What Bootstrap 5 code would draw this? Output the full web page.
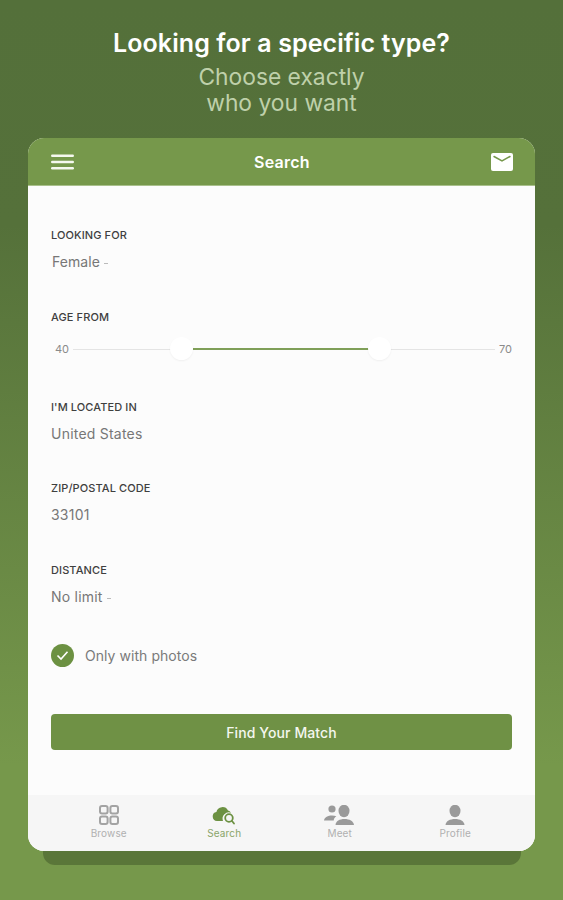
<!DOCTYPE html>
<html lang="en"><head><meta charset="utf-8"><title>Search</title>
<link href="https://cdn.jsdelivr.net/npm/bootstrap@5.3.0/dist/css/bootstrap.min.css" rel="stylesheet">
<style>
html,body{height:900px;overflow:hidden}
body{font-family:Inter,"Liberation Sans",sans-serif;background:linear-gradient(180deg,#54703a 0%,#55713a 25%,#76984b 85%,#76984b 100%);width:563px}
.shot{height:900px;padding-top:27px}
.hero-main{font-size:25px;line-height:32px;font-weight:600;color:#fff;margin:0 0 5px;letter-spacing:.1px}
.hero-sub{font-size:22.8px;line-height:26px;color:#bfd0aa;margin:0 0 22px}
.phone-wrap{margin:0 28px;position:relative}
.under-layer{position:absolute;left:15px;right:14px;bottom:-14px;height:60px;background:#5a7639;border-radius:0 0 12px 12px}
.phone{position:relative;height:713px;border-radius:16px;overflow:hidden;background:#fcfcfc}
.app-head{height:48px;background:#76984b;padding:0 22px 0 23px;border-bottom:1px solid #a9c08c;color:#fff}
.app-title{font-size:16px;font-weight:600;letter-spacing:.25px;margin-left:-1px}
.form-area{height:609px;padding:42px 23px 0}
.f-label{font-size:11px;line-height:14px;font-weight:500;color:#3f3f3f;letter-spacing:.1px;margin-bottom:10px}
.g-slider .f-label{margin-bottom:11px}
.f-value{font-size:14px;line-height:20px;color:#777;letter-spacing:.22px}
.f-value.nudged{margin-left:1px;letter-spacing:.05px}
.caret-mark{display:inline-block;width:4px;height:1px;background:#bbb;vertical-align:middle;margin-left:4px}
.f-group{margin-bottom:38px}
.f-group.g-slider{margin-bottom:37px}
.f-group.g-located{margin-bottom:37px}
.f-group.g-last{margin-bottom:37px}
.slide-row{font-size:11px;color:#8a8a8a;height:28px;margin-top:2px}
.slide-track{height:1px;background:#e4e4e4;position:relative}
.slide-on{position:absolute;left:120px;width:186px;top:-1px;height:2px;background:#7f9f58}
.slide-knob{position:absolute;top:-12px;width:23px;height:23px;border-radius:50%;background:#fff;box-shadow:0 1px 2px rgba(0,0,0,.05)}
.check-dot{width:23px;height:23px;border-radius:50%;background:#6c9142}
.check-text{font-size:14px;color:#7a7a7a;letter-spacing:.05px;margin-left:3px}
.match-btn{background:#6f9145;border:0;color:#f4f7ef;font-size:14px;font-weight:500;height:36px;border-radius:4px;margin-top:47px;letter-spacing:.1px}
.match-btn:hover{background:#6f9145;color:#fff}
.tabs{height:56px;background:#f6f6f6;padding:0 22px 0 23px}
.tab-item{width:115.5px;font-size:10px;line-height:12px;color:#b0b0b0;padding-top:10px;letter-spacing:.15px}
.tab-item svg{display:block;margin:0 auto 2px}
.tab-on{color:#8aa56a}
</style></head><body>
<div class="shot">
<h1 class="hero-main text-center">Looking for a specific type?</h1>
<p class="hero-sub text-center">Choose exactly<br>who you want</p>
<div class="phone-wrap">
<div class="under-layer"></div>
<div class="phone d-flex flex-column">
<div class="app-head d-flex align-items-center justify-content-between">
<svg width="23" height="16" viewBox="0 0 23 16"><g fill="#f5f8ee"><rect x="0" y="0.5" width="23" height="2.4" rx="1.2"/><rect x="0" y="6.8" width="23" height="2.4" rx="1.2"/><rect x="0" y="13.1" width="23" height="2.4" rx="1.2"/></g></svg>
<span class="app-title">Search</span>
<svg width="22" height="18" viewBox="0 0 22 18"><rect width="22" height="18" rx="2" fill="#fff"/><path d="M3 3.500 11 8 19 3.500" fill="none" stroke="#76984b" stroke-width="1.500" stroke-linecap="round"/></svg>
</div>
<div class="form-area">
<div class="f-group"><div class="f-label">LOOKING FOR</div><div class="f-value nudged">Female<span class="caret-mark"></span></div></div>
<div class="f-group g-slider"><div class="f-label">AGE FROM</div>
<div class="slide-row d-flex align-items-center gap-1"><span class="ms-1">40</span><div class="slide-track flex-grow-1"><div class="slide-on"></div><div class="slide-knob" style="left:97px"></div><div class="slide-knob" style="left:295px"></div></div><span>70</span></div></div>
<div class="f-group g-located"><div class="f-label">I'M LOCATED IN</div><div class="f-value">United States</div></div>
<div class="f-group"><div class="f-label">ZIP/POSTAL CODE</div><div class="f-value">33101</div></div>
<div class="f-group g-last"><div class="f-label">DISTANCE</div><div class="f-value">No limit<span class="caret-mark"></span></div></div>
<div class="d-flex align-items-center gap-2"><div class="check-dot d-flex align-items-center justify-content-center flex-shrink-0"><svg width="13" height="11" viewBox="0 0 13 11"><path d="M1.500 5.500 5 9 11.500 1.800" fill="none" stroke="#fff" stroke-width="1.600"/></svg></div><span class="check-text">Only with photos</span></div>
<button class="btn match-btn w-100" type="button">Find Your Match</button>
</div>
<div class="tabs d-flex">
<div class="tab-item text-center"><svg width="20" height="20" viewBox="0 0 20 20" fill="none" stroke="#a3a3a3" stroke-width="2"><rect x="1" y="1" width="7.600" height="7.600" rx="2"/><rect x="11.400" y="1" width="7.600" height="7.600" rx="2"/><rect x="1" y="11.400" width="7.600" height="7.600" rx="2"/><rect x="11.400" y="11.400" width="7.600" height="7.600" rx="2"/></svg>Browse</div>
<div class="tab-item tab-on text-center"><svg width="24" height="20" viewBox="0 0 24 20"><path d="M5 16a4.600 4.600 0 0 1-.6-9.100A6.200 6.200 0 0 1 16 5.600a4.500 4.500 0 0 1 3 2.200a6.300 6.300 0 0 0-8 8.200z" fill="#6c9142"/><circle cx="17" cy="13" r="3.800" fill="none" stroke="#6c9142" stroke-width="1.800"/><path d="M20 16 22 18.500" stroke="#6c9142" stroke-width="1.800" stroke-linecap="round"/></svg>Search</div>
<div class="tab-item text-center"><svg width="31" height="20" viewBox="0 0 31 20" fill="#9a9a9a"><circle cx="8" cy="4" r="3.600"/><path d="M0 15.500c.5-3.500 4-5 8-5 1.700 0 3.200.3 4.400.8-1.500.8-2.500 2.300-2.700 4.200z"/><ellipse cx="20" cy="6" rx="5.500" ry="6.200"/><path d="M11.500 20c.3-4 4-6 9-6s9 2 9.500 6z"/></svg>Meet</div>
<div class="tab-item text-center"><svg width="20" height="20" viewBox="0 0 20 20" fill="#9a9a9a"><ellipse cx="10" cy="6" rx="5.500" ry="6.200"/><path d="M.5 20c.3-4 4.500-6 9.500-6s9.200 2 9.500 6z"/></svg>Profile</div>
</div>
</div>
</div>
</div>
</body></html>
